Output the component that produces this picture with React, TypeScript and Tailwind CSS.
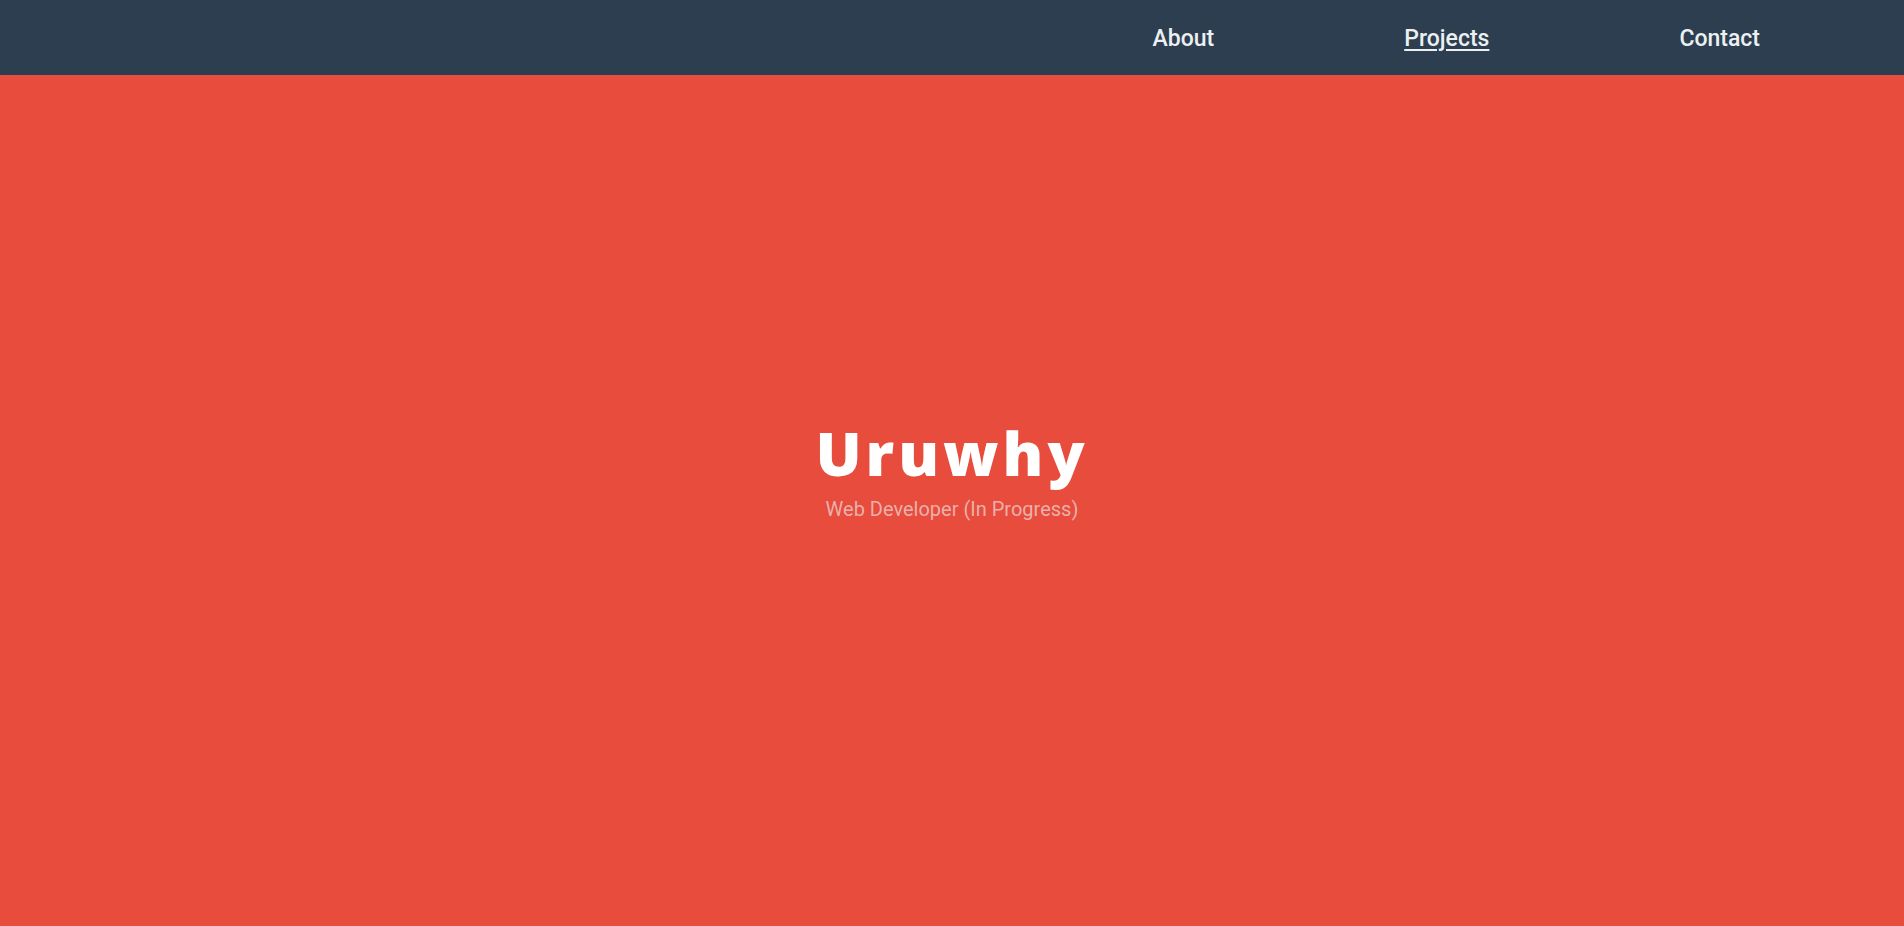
export default function App() {
  const links = ['About', 'Projects', 'Contact']

  return (
    <div className="min-h-screen flex flex-col bg-[#e74c3c]" style={{ fontFamily: 'Roboto, sans-serif' }}>
      <nav className="h-[75px] bg-[#2c3e50] flex items-center justify-end pr-[144px] pt-[3px]">
        <ul className="flex items-center gap-[190px]">
          {links.map((link) => (
            <li key={link}>
              <a
                href="#"
                className={`text-[23px] font-medium text-[#ecf0f1] ${link === 'Projects' ? 'underline underline-offset-[3px] decoration-[1.5px]' : ''}`}
              >
                {link}
              </a>
            </li>
          ))}
        </ul>
      </nav>

      <main className="h-[851px] flex flex-col items-center justify-center pb-[60px]">
        <h1
          className="text-[61px] leading-none font-extrabold text-white tracking-[4px]"
          style={{ fontFamily: '"Open Sans", sans-serif' }}
        >
          Uruwhy
        </h1>
        <p className="mt-[16px] text-[20px] leading-none text-[#ebb0aa]">Web Developer (In Progress)</p>
      </main>
    </div>
  )
}
